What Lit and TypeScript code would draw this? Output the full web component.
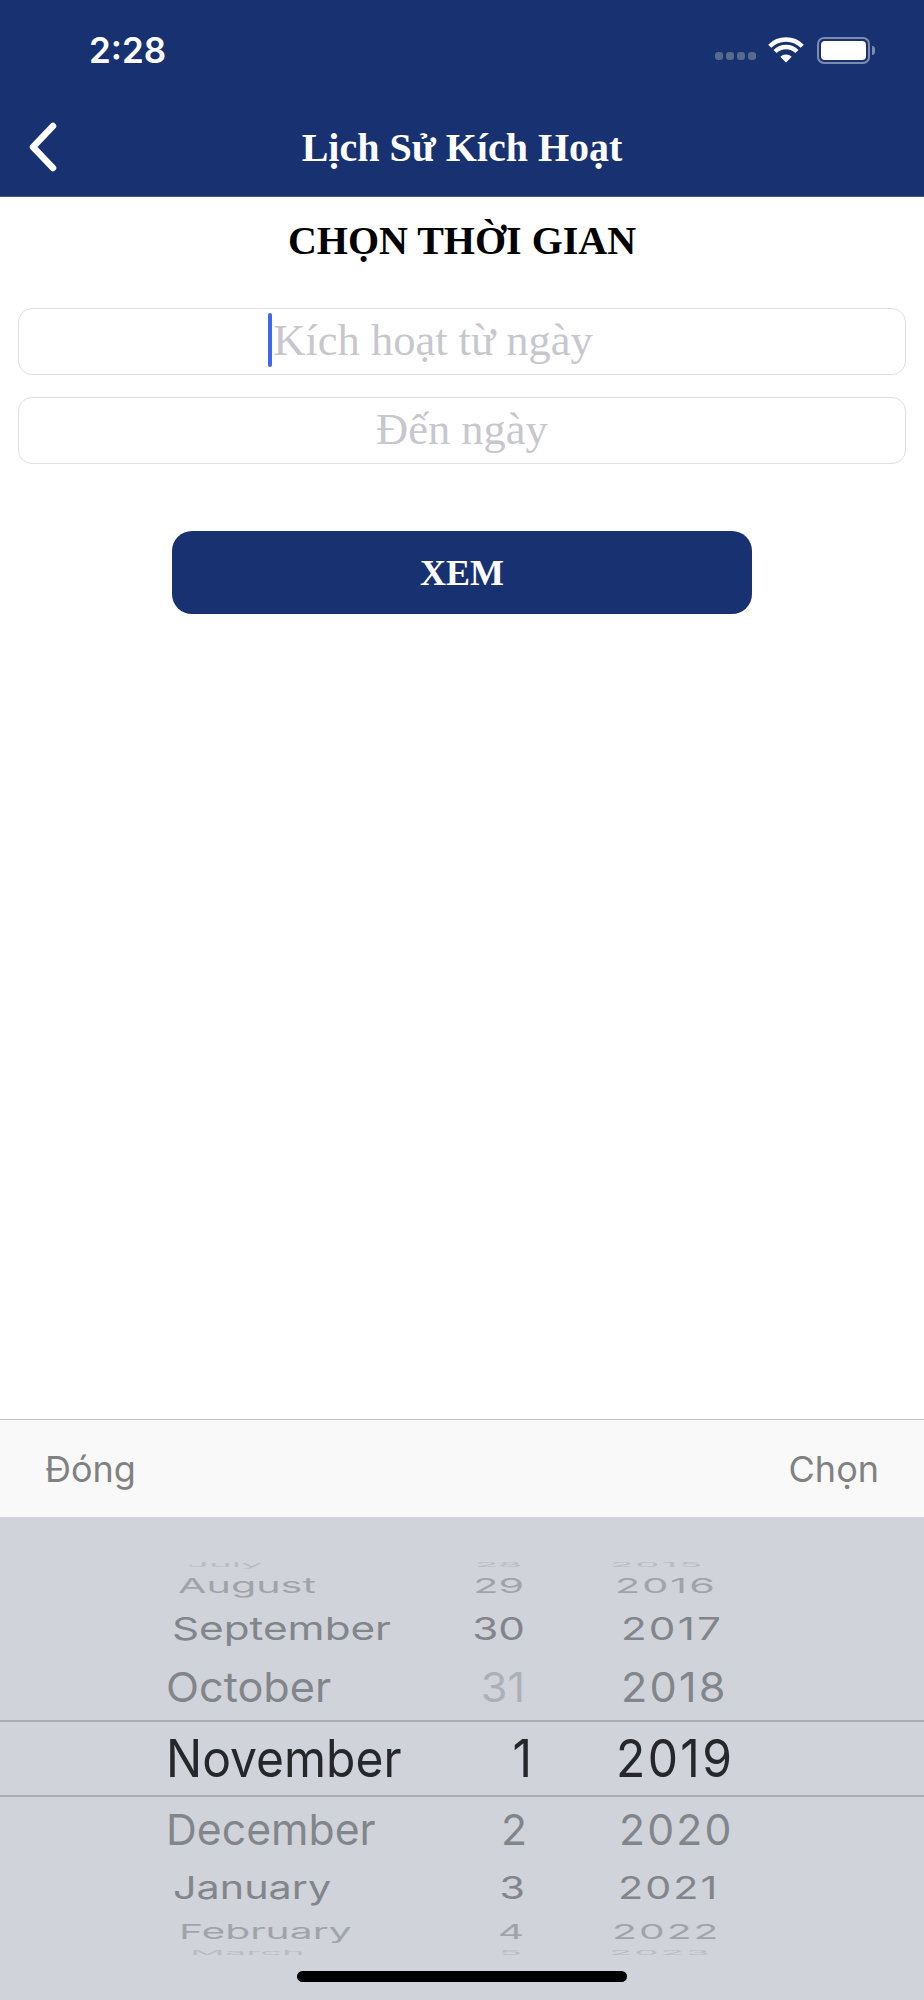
import { LitElement, html, css } from 'lit';
import { customElement } from 'lit/decorators.js';

interface WheelRow {
  height: number;
  scaleX: number;
  scaleY: number;
  opacity: number;
  month: string;
  monthX: number;
  day: string;
  dayX: number;
  year: string;
  yearX: number;
  dayOpacity?: number;
  selected?: boolean;
}

const ROWS: WheelRow[] = [
  { height: 7, scaleX: 0.8, scaleY: 0.14, opacity: 0.13, month: 'July', monthX: 21, day: '28', dayX: -5, year: '2015', yearX: -8 },
  { height: 36, scaleX: 0.86, scaleY: 0.43, opacity: 0.27, month: 'August', monthX: 12, day: '29', dayX: -3, year: '2016', yearX: -3 },
  { height: 50, scaleX: 0.88, scaleY: 0.66, opacity: 0.45, month: 'September', monthX: 6, day: '30', dayX: -2, year: '2017', yearX: 3 },
  { height: 66, scaleX: 0.9, scaleY: 0.86, opacity: 0.45, month: 'October', monthX: 0, day: '31', dayX: -2, year: '2018', yearX: 3, dayOpacity: 0.2 },
  { height: 77, scaleX: 1, scaleY: 1.08, opacity: 1, month: 'November', monthX: 0, day: '1', dayX: 5, year: '2019', yearX: -2, selected: true },
  { height: 65, scaleX: 0.89, scaleY: 0.89, opacity: 0.45, month: 'December', monthX: 0, day: '2', dayX: 0, year: '2020', yearX: 1 },
  { height: 52, scaleX: 0.86, scaleY: 0.66, opacity: 0.45, month: 'January', monthX: 7, day: '3', dayX: -2, year: '2021', yearX: 0 },
  { height: 36, scaleX: 0.85, scaleY: 0.43, opacity: 0.27, month: 'February', monthX: 13, day: '4', dayX: -3, year: '2022', yearX: -6 },
  { height: 6, scaleX: 0.8, scaleY: 0.12, opacity: 0.13, month: 'March', monthX: 24, day: '5', dayX: -5, year: '2023', yearX: -9 },
];

@customElement('app-root')
export class AppRoot extends LitElement {
  static styles = css`
    :host {
      display: block;
      height: 2000px;
      background: #fff;
    }

    .screen {
      display: flex;
      flex-direction: column;
      height: 100%;
    }

    .header {
      height: 197px;
      box-sizing: border-box;
      background: #183171;
      border-bottom: 1px solid #41598f;
      color: #fff;
      flex: none;
    }

    .status {
      display: flex;
      align-items: center;
      height: 100px;
      padding: 0 49px 0 89px;
    }

    .status__time {
      font: 600 35px 'Inter', sans-serif;
    }

    .status__icons {
      display: flex;
      align-items: center;
      margin-left: auto;
    }

    .signal {
      display: flex;
      gap: 3px;
      margin: 12px 12px 0 0;
    }

    .signal span {
      width: 8px;
      height: 8px;
      border-radius: 3px;
      background: #56698f;
    }

    .wifi {
      width: 36px;
      height: 26px;
      margin-right: 13px;
    }

    .battery {
      width: 53px;
      height: 27px;
      box-sizing: border-box;
      border: 2px solid #7c8cb0;
      border-radius: 7px;
      padding: 2px;
    }

    .battery span {
      display: block;
      height: 100%;
      background: #fff;
      border-radius: 4px;
    }

    .battery-nub {
      width: 3px;
      height: 9px;
      margin-left: 2px;
      background: #7c8cb0;
      border-radius: 0 3px 3px 0;
    }

    .nav {
      display: grid;
      grid-template-columns: 1fr auto 1fr;
      align-items: center;
      height: 94px;
    }

    .nav__back {
      width: 30px;
      height: 50px;
      margin-left: 28px;
    }

    .nav__title {
      font: 700 40px 'Liberation Serif', serif;
    }

    .content {
      flex: 1;
      display: flex;
      flex-direction: column;
      align-items: center;
      padding: 0 18px;
    }

    .content__heading {
      font: 700 40px/46px 'Liberation Serif', serif;
      color: #000;
      margin: 21px 0 0;
    }

    .field {
      align-self: stretch;
      height: 67px;
      box-sizing: border-box;
      border: 1.5px solid #dfdfdf;
      border-radius: 14px;
      padding-bottom: 4px;
      display: flex;
      align-items: center;
      justify-content: center;
      font: 400 44.5px 'Liberation Serif', serif;
      color: #c7c7cd;
      margin-top: 22px;
    }

    .field--first {
      margin-top: 44px;
      padding-right: 63px;
    }

    .field__cursor {
      width: 4px;
      height: 54px;
      border-radius: 2px;
      background: #3f66ee;
      margin-right: 1px;
    }

    .submit {
      width: 580px;
      height: 83px;
      box-sizing: border-box;
      padding-top: 1px;
      margin-top: 67px;
      border-radius: 20px;
      background: #183171;
      color: #fff;
      font: 700 36px 'Liberation Serif', serif;
      display: flex;
      align-items: center;
      justify-content: center;
    }

    .toolbar {
      flex: none;
      height: 98px;
      box-sizing: border-box;
      display: flex;
      align-items: center;
      justify-content: space-between;
      padding: 0 45px;
      background: #f9f9f9;
      border-top: 1.5px solid #c4c4c6;
      font: 400 36px 'Inter', sans-serif;
      color: #818181;
    }

    .picker {
      flex: none;
      height: 483px;
      box-sizing: border-box;
      padding-top: 44px;
      background: #d0d3da;
      display: flex;
      flex-direction: column;
      align-items: center;
    }

    .wheel {
      align-self: stretch;
      height: 395px;
      overflow: hidden;
    }

    .wheel__row {
      display: grid;
      grid-template-columns: 242px 119px auto;
      grid-template-rows: minmax(0, 1fr);
      align-items: center;
      justify-content: start;
      box-sizing: border-box;
      padding-left: 166px;
      font: 400 48px 'Inter', sans-serif;
      color: #26272a;
      white-space: nowrap;
    }

    .wheel__row--selected {
      border-block: 2px solid #a9abb2;
    }

    .wheel__cell {
      display: block;
      line-height: 1;
      transform-origin: left center;
    }

    .wheel__cell--day {
      text-align: right;
      transform-origin: right center;
    }

    .wheel__cell--year {
      margin-left: 91px;
      letter-spacing: 2.4px;
    }

    .home-bar {
      width: 330px;
      height: 11px;
      margin-top: 15px;
      border-radius: 6px;
      background: #000;
    }
  `;

  private cell(text: string, dx: number, row: WheelRow, mod = '', opacity = row.opacity) {
    const style = `transform: translateX(${dx}px) scale(${row.scaleX}, ${row.scaleY}); opacity: ${opacity};`;
    return html`<span class="wheel__cell ${mod}" style=${style}>${text}</span>`;
  }

  render() {
    return html`
      <div class="screen">
        <header class="header">
          <div class="status">
            <span class="status__time">2:28</span>
            <div class="status__icons">
              <div class="signal"><span></span><span></span><span></span><span></span></div>
              <svg class="wifi" viewBox="0 0 36 26" fill="none" aria-hidden="true">
                <path d="M1.74 9.24A23 23 0 0 1 34.26 9.24M7.04 14.54A15.5 15.5 0 0 1 28.96 14.54" stroke="#fff" stroke-width="4.4"></path>
                <path d="M18 25.5L12.3 19.8A8 8 0 0 1 23.7 19.8Z" fill="#fff"></path>
              </svg>
              <div class="battery"><span></span></div>
              <div class="battery-nub"></div>
            </div>
          </div>
          <div class="nav">
            <svg class="nav__back" viewBox="0 0 30 50" fill="none" aria-hidden="true">
              <path d="M25 4L5 25L25 46" stroke="#fff" stroke-width="6.5" stroke-linecap="round" stroke-linejoin="round"></path>
            </svg>
            <div class="nav__title">Lịch Sử Kích Hoạt</div>
            <span></span>
          </div>
        </header>

        <main class="content">
          <h1 class="content__heading">CHỌN THỜI GIAN</h1>
          <div class="field field--first"><span class="field__cursor"></span>Kích hoạt từ ngày</div>
          <div class="field">Đến ngày</div>
          <div class="submit">XEM</div>
        </main>

        <div class="toolbar"><span>Đóng</span><span>Chọn</span></div>

        <div class="picker">
          <div class="wheel">
            ${ROWS.map(
              (row) => html`
                <div
                  class="wheel__row ${row.selected ? 'wheel__row--selected' : ''}"
                  style="height: ${row.height}px;"
                >
                  ${this.cell(row.month, row.monthX, row)}
                  ${this.cell(row.day, row.dayX, row, 'wheel__cell--day', row.dayOpacity ?? row.opacity)}
                  ${this.cell(row.year, row.yearX, row, 'wheel__cell--year')}
                </div>
              `,
            )}
          </div>
          <div class="home-bar"></div>
        </div>
      </div>
    `;
  }
}
